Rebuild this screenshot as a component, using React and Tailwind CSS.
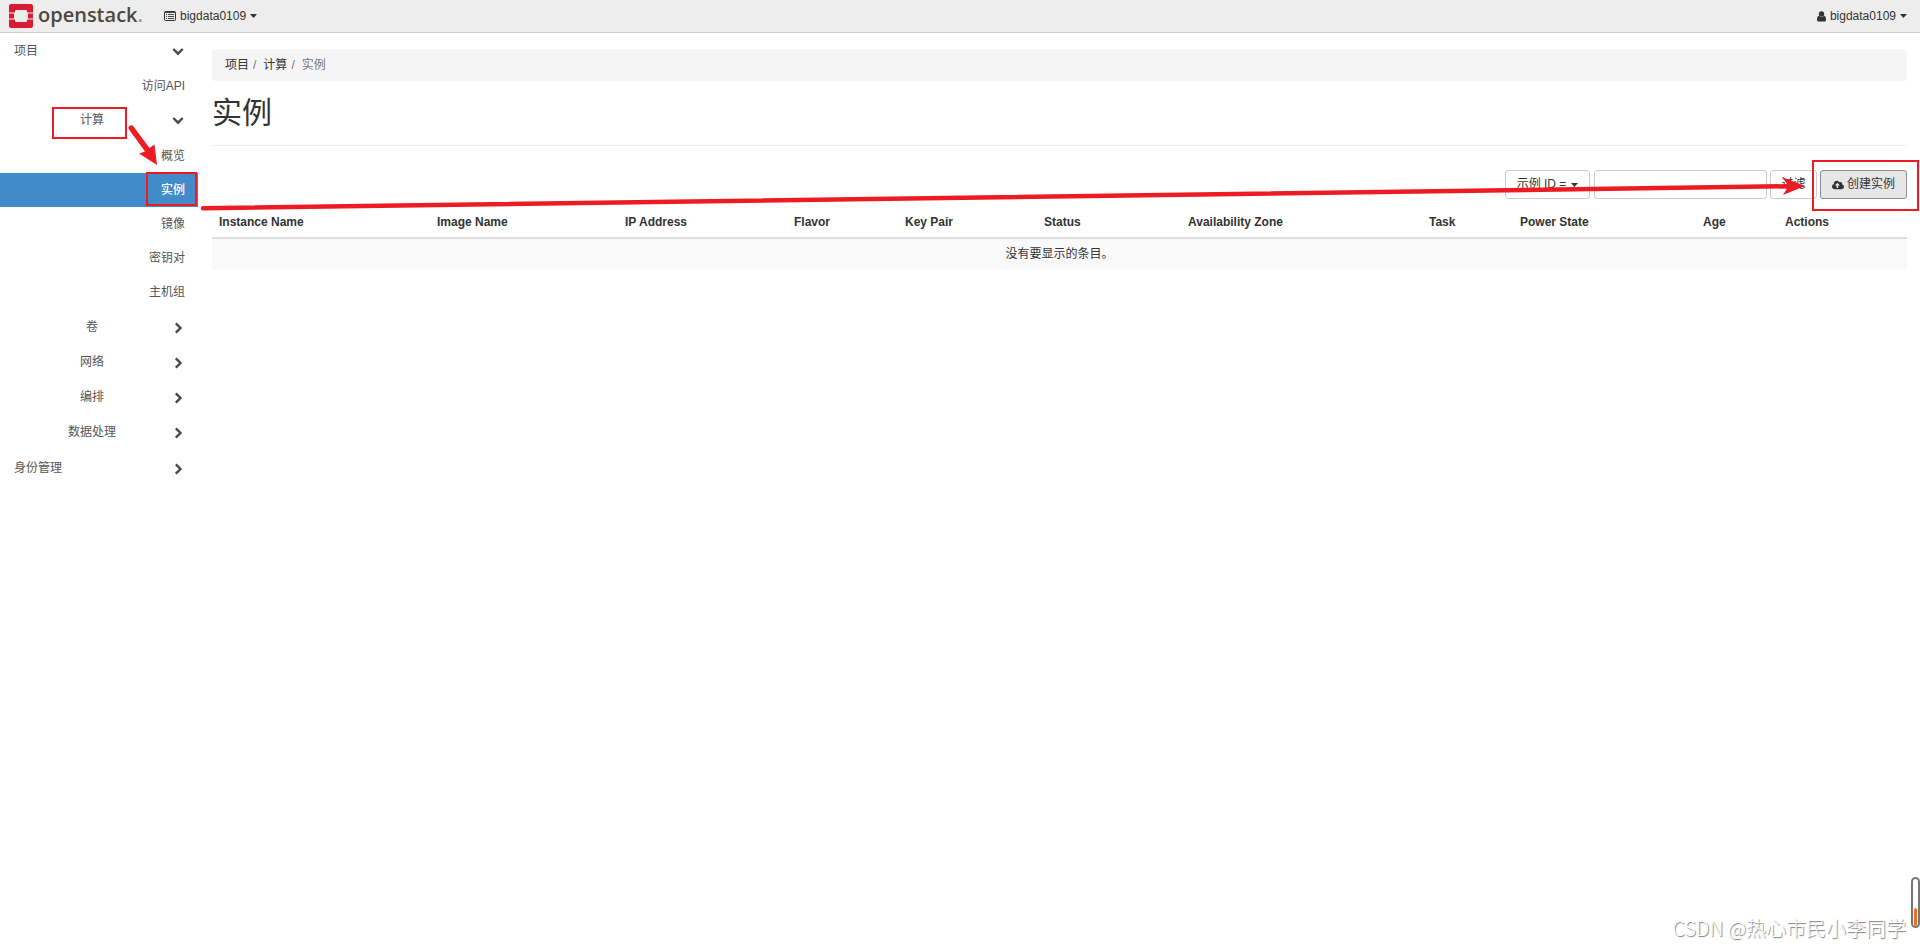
import { FaCloudUploadAlt } from "react-icons/fa"

const computeItems = ["概览", "实例", "镜像", "密钥对", "主机组"]
const closedGroups = ["卷", "网络", "编排", "数据处理"]

const columns = [
  { name: "Instance Name", width: "w-[218px]" },
  { name: "Image Name", width: "w-[188px]" },
  { name: "IP Address", width: "w-[169px]" },
  { name: "Flavor", width: "w-[111px]" },
  { name: "Key Pair", width: "w-[139px]" },
  { name: "Status", width: "w-[144px]" },
  { name: "Availability Zone", width: "w-[241px]" },
  { name: "Task", width: "w-[91px]" },
  { name: "Power State", width: "w-[183px]" },
  { name: "Age", width: "w-[82px]" },
  { name: "Actions", width: "w-[129px]" },
]

function Logo() {
  return (
    <a href="#" className="flex items-center gap-[5px]" aria-label="openstack">
      <svg width="24" height="24" viewBox="0 0 24 24" fill="#da1a32">
        <path d="M2 0h20a2 2 0 0 1 2 2v6.500h-6V7a1 1 0 0 0-1-1H7a1 1 0 0 0-1 1v1.500H0V2a2 2 0 0 1 2-2z" />
        <path d="M0 9.500h5v5H0zM19 9.500h5v5h-5z" />
        <path d="M0 15.500h6V17a1 1 0 0 0 1 1h10a1 1 0 0 0 1-1v-1.500h6V22a2 2 0 0 1-2 2H2a2 2 0 0 1-2-2z" />
      </svg>
      <span className="pb-0.5 font-['Open_Sans',sans-serif] text-[20px] leading-6 font-semibold text-[#4d4742]">
        openstack<span className="text-[#999]">.</span>
      </span>
    </a>
  )
}

function ListIcon() {
  return (
    <svg width="12" height="10" viewBox="0 0 12 10" fill="none" stroke="#333">
      <rect x="0.5" y="0.5" width="11" height="9" rx="0.8" />
      <path d="M1 1.500h10M2 3.500h1M4 3.500h6M2 5.500h1M4 5.500h6M2 7.500h1M4 7.500h6" strokeWidth="0.9" />
    </svg>
  )
}

function UserIcon() {
  return (
    <svg width="9" height="11" viewBox="0 0 9 11" fill="#333">
      <circle cx="4.5" cy="3" r="2.700" />
      <path d="M2 4.800c.7.800 1.500 1.200 2.500 1.200S6.300 5.600 7 4.800c1.500.2 2 1.700 2 3.900C9 10 8.300 10.600 7.300 10.600H1.700C.7 10.600 0 10 0 8.700c0-2.200.5-3.700 2-3.900z" />
    </svg>
  )
}

function Caret() {
  return (
    <svg width="7" height="4" viewBox="0 0 7 4" fill="#333">
      <path d="M0 0h7L3.500 4z" />
    </svg>
  )
}

function Chevron({ open }) {
  return (
    <svg width="12" height="12" viewBox="0 0 12 12" fill="none" stroke="#4a4a4a" strokeWidth="2.4">
      <path d={open ? "M1.300 3 6 7.700l4.700-4.700" : "M3.800 1.300 8.500 6l-4.700 4.700"} />
    </svg>
  )
}

function GroupButton({ label, open, nested }) {
  return (
    <button
      aria-expanded={!!open}
      className={`flex h-[35px] w-full items-center pr-3.5 ${nested ? "pl-3" : "pl-3.5"}`}
    >
      <span className={`flex-1 ${nested ? "text-center" : "text-left"}`}>{label}</span>
      <Chevron open={open} />
    </button>
  )
}

function Leaf({ label, active }) {
  return (
    <a
      href="#"
      className={`relative flex h-[34px] items-center justify-end pr-[13px] ${
        active ? "bg-[#428bca] font-medium text-white" : ""
      }`}
    >
      {label}
      {active && <span className="absolute -top-px right-px h-[34px] w-[51px] border-2 border-[#ed1c24]" />}
    </a>
  )
}

function Sidebar() {
  return (
    <nav className="w-[198px] shrink-0 pt-px text-[#555]">
      <GroupButton label="项目" open />
      <Leaf label="访问API" />
      <div className="relative pb-px">
        <GroupButton label="计算" open nested />
        <span className="pointer-events-none absolute top-1 left-[52px] h-8 w-[75px] border-2 border-[#ed1c24]" />
      </div>
      {computeItems.map((item) => (
        <Leaf key={item} label={item} active={item === "实例"} />
      ))}
      <div className="py-px">
        {closedGroups.map((group) => (
          <GroupButton key={group} label={group} nested />
        ))}
      </div>
      <GroupButton label="身份管理" />
    </nav>
  )
}

function Toolbar() {
  return (
    <div className="flex justify-end gap-[3px]">
      <button className="mr-px flex h-[29px] w-[85px] items-center justify-center gap-[5px] rounded-[3px] border border-[#ccc]">
        示例 ID = <Caret />
      </button>
      <input aria-label="过滤条件" className="h-[29px] w-[173px] rounded-[3px] border border-[#ccc] px-2" />
      <button className="h-[29px] w-[47px] rounded-[3px] border border-[#ccc]">过滤</button>
      <div className="relative">
        <button className="flex h-[29px] w-[87px] items-center justify-center gap-[3px] rounded-[3px] border border-[#8c8c8c] bg-[#e6e6e6]">
          <FaCloudUploadAlt size={12} />
          创建实例
        </button>
        <span className="pointer-events-none absolute -top-2.5 -left-2 h-[51px] w-[107px] border-2 border-[#ed1c24]" />
      </div>
    </div>
  )
}

function InstanceTable() {
  return (
    <table className="mt-[7px] w-full table-fixed border-collapse">
      <thead>
        <tr className="border-b-2 border-[#ddd]">
          {columns.map((col) => (
            <th key={col.name} className={`${col.width} h-8 px-[7px] pt-0.5 text-left font-bold`}>
              {col.name}
            </th>
          ))}
        </tr>
      </thead>
      <tbody>
        <tr className="bg-[#f9f9f9]">
          <td colSpan={columns.length} className="h-8 text-center">
            没有要显示的条目。
          </td>
        </tr>
      </tbody>
    </table>
  )
}

// Hand-drawn arrows that point from the menu to the create button
function Arrows() {
  return (
    <>
      <svg className="pointer-events-none absolute top-[124px] left-[128px]" width="32" height="42" fill="#ed1c24">
        <path d="M1 5.500a2.500 2.500 0 0 1 4.500-3L21.500 24l5-3.500L29 41 11 29.500l6-2z" />
      </svg>
      <svg
        className="pointer-events-none absolute top-[176px] right-[114px] left-[200px] h-9 w-[calc(100%-314px)]"
        viewBox="0 0 1606 36"
        preserveAspectRatio="none"
        fill="#ed1c24"
      >
        <path d="M3 30 1587 8 1582 1l23 9-22 9 4-6.500L3 34.500a2.200 2.200 0 0 1 0-4.500z" />
      </svg>
    </>
  )
}

export default function App() {
  return (
    <div className="relative min-h-screen bg-white font-['Liberation_Sans','Noto_Sans_CJK_SC',sans-serif] text-[12px] leading-[17px] text-[#333]">
      <header className="flex h-[33px] items-center border-b border-[#ccc] bg-[#ededed] pr-[13px] pl-[9px]">
        <Logo />
        <button className="ml-[21px] flex items-center gap-1">
          <ListIcon />
          bigdata0109
          <Caret />
        </button>
        <button className="ml-auto flex items-center gap-1">
          <UserIcon />
          bigdata0109
          <Caret />
        </button>
      </header>

      <div className="flex">
        <Sidebar />
        <main className="min-w-0 flex-1 pt-4 pr-[13px] pl-3.5">
          <ol className="flex h-8 items-center rounded bg-[#f5f5f5] px-[13px]">
            <li><a href="#">项目</a></li>
            <li className="pr-[7px] pl-1 text-[#777]">/</li>
            <li><a href="#">计算</a></li>
            <li className="pr-[7px] pl-1 text-[#777]">/</li>
            <li className="text-[#777]">实例</li>
          </ol>
          <h1 className="mt-3.5 mb-6 border-b border-[#eee] pb-3.5 text-[30px] leading-9">实例</h1>
          <Toolbar />
          <InstanceTable />
        </main>
      </div>

      <Arrows />

      <div className="absolute right-0 bottom-[18px] h-[51px] w-[9px] rounded-full border-2 border-[#777] bg-white">
        <span className="absolute bottom-0 left-px h-[18px] w-[3px] rounded-full bg-[#ff6a1a]" />
      </div>
      <p className="absolute right-3.5 bottom-1.5 font-['Noto_Sans_CJK_SC',sans-serif] text-[20px] leading-6 font-light text-white [text-shadow:1px_1px_1px_#777]">
        CSDN @热心市民小李同学
      </p>
    </div>
  )
}
